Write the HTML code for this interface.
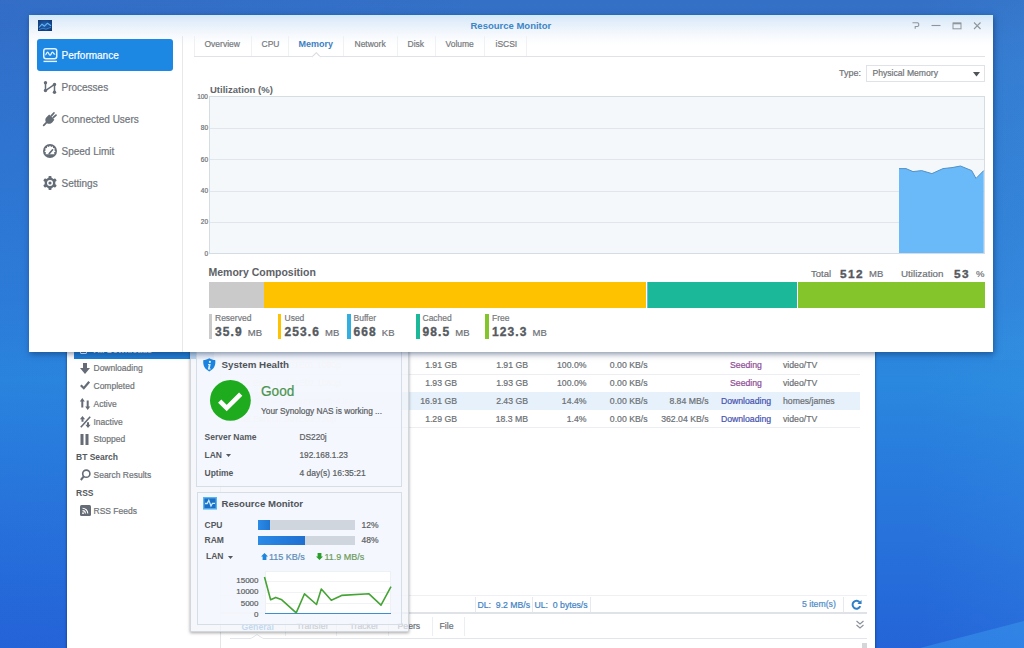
<!DOCTYPE html>
<html><head><meta charset="utf-8">
<style>
*{margin:0;padding:0;box-sizing:border-box}
html,body{width:1024px;height:648px;overflow:hidden}
body{position:relative;font-family:"Liberation Sans",sans-serif;color:#555;
background:linear-gradient(90deg,rgba(30,60,210,0.05) 0%,rgba(0,0,0,0) 50%,rgba(0,0,0,0) 90%,rgba(70,175,240,0.1) 100%),linear-gradient(180deg,#3470c6 0px,#3075ce 100px,#2d7ed8 300px,#2a88de 380px,#2877dc 500px,#2464d8 648px)}
.a{position:absolute;white-space:nowrap;line-height:0;-webkit-text-stroke:0.2px currentColor}
.b,b{-webkit-text-stroke:0}
.r{text-align:right}
.b{font-weight:bold}
.bx{position:absolute}
svg{position:absolute;overflow:visible}
</style></head><body>
<!-- desktop highlight -->
<div class="bx" style="left:993px;top:0;width:31px;height:360px;background:linear-gradient(180deg,rgba(70,150,225,0) 0px,rgba(70,160,230,0.12) 60px,rgba(70,165,235,0.12) 360px)"></div>
<svg style="left:0;top:0" width="1024" height="648"><polygon points="920,648 1024,621 1024,648" fill="rgba(60,160,240,0.45)"/></svg>

<!-- ===== Download Station window ===== -->
<div class="bx" id="ds" style="left:66.5px;top:290px;width:808.5px;height:370px;background:#fff;box-shadow:0 0 2.5px rgba(0,30,90,0.7)"></div>
<div class="bx" style="left:220px;top:290px;width:1px;height:360px;background:#e2e5e9"></div>
<div class="bx" style="left:74px;top:338px;width:140px;height:20.5px;background:#1f7dd4"></div>
<div class="bx" style="left:80px;top:344px;width:7px;height:9.5px;border:1.3px solid #fff;border-radius:1px"></div>
<div class="a b" style="left:93.5px;top:350.3px;font-size:8.5px;color:#fff">All Downloads</div>
<div id="dsside" style="font-size:8.5px;color:#707478">
<svg style="left:80px;top:363px" width="10" height="11" viewBox="0 0 10 11"><path d="M3 0h4v5h3l-5 6l-5-6h3z" fill="#656c75"/></svg>
<div class="a" style="left:93.5px;top:368px">Downloading</div>
<svg style="left:80px;top:380px" width="10" height="10" viewBox="0 0 10 10"><path d="M0.8 5.2l3 3l5.4-6.4" fill="none" stroke="#656c75" stroke-width="2.2"/></svg>
<div class="a" style="left:93.5px;top:385.5px">Completed</div>
<svg style="left:80px;top:398px" width="10" height="12" viewBox="0 0 10 12"><path d="M2.3 0l2.5 3.6h-1.5v6h-2v-6h-1.5z M7.7 12l2.5-3.6h-1.5v-6h-2v6h-1.5z" fill="#656c75"/></svg>
<div class="a" style="left:93.5px;top:403.5px">Active</div>
<svg style="left:80px;top:416px" width="11" height="12" viewBox="0 0 11 12"><path d="M2.5 0l2.6 3.2h-1.6v2.6h-2v-2.6h-1.6z" fill="#656c75"/><path d="M8 12l2.6-3.2h-1.6v-2.6h-2v2.6h-1.6z" fill="#656c75"/><path d="M0.8 11.2l9.4-10.4" stroke="#656c75" stroke-width="1.6"/></svg>
<div class="a" style="left:93.5px;top:421.5px">Inactive</div>
<svg style="left:80px;top:434px" width="9" height="11" viewBox="0 0 9 11"><rect x="0.5" y="0" width="3" height="11" fill="#656c75"/><rect x="5.5" y="0" width="3" height="11" fill="#656c75"/></svg>
<div class="a" style="left:93.5px;top:439px">Stopped</div>
<div class="a b" style="left:76px;top:457px;color:#555a60">BT Search</div>
<svg style="left:80px;top:469px" width="11" height="12" viewBox="0 0 11 12"><circle cx="6.3" cy="4.7" r="3.6" fill="none" stroke="#656c75" stroke-width="1.6"/><path d="M3.8 7.4l-3 3.6" stroke="#656c75" stroke-width="2"/></svg>
<div class="a" style="left:93.5px;top:475px">Search Results</div>
<div class="a b" style="left:76px;top:493px;color:#555a60">RSS</div>
<svg style="left:79.5px;top:505px" width="11" height="11" viewBox="0 0 11 11"><rect width="11" height="11" rx="1.5" fill="#656c75"/><path d="M2.5 3.2a5.3 5.3 0 0 1 5.3 5.3M2.5 5.6a2.9 2.9 0 0 1 2.9 2.9" fill="none" stroke="#fff" stroke-width="1.1"/><circle cx="3" cy="8.2" r="0.9" fill="#fff"/></svg>
<div class="a" style="left:93.5px;top:511px">RSS Feeds</div>
</div>
<div id="dstable" style="font-size:8.7px;color:#6b6f74">
<div class="bx" style="left:220px;top:374px;width:640px;height:1px;background:#eceef1"></div>
<div class="bx" style="left:220px;top:392px;width:640px;height:18px;background:#e6f1fb"></div>
<div class="bx" style="left:220px;top:427px;width:640px;height:1px;background:#eceef1"></div>
<!-- rows -->
<div style="color:#d6d9dc">
<div class="a" style="left:226px;top:365px">Planet.Earth.II.S01E01.1080p</div>
<div class="a" style="left:226px;top:383px">Planet.Earth.II.S01E02.1080p</div>
<div class="a" style="left:226px;top:401px">ubuntu-20.04-desktop-amd64.iso</div>
<div class="a" style="left:226px;top:419px">Planet.Earth.II.S01E03.720p</div>
</div>
<div class="a r" style="right:567px;top:365px">1.91 GB</div>
<div class="a r" style="right:496px;top:365px">1.91 GB</div>
<div class="a r" style="right:437.5px;top:365px">100.0%</div>
<div class="a r" style="right:376.5px;top:365px">0.00 KB/s</div>
<div class="a" style="left:746px;top:365px;transform:translateX(-50%);color:#8d4c94">Seeding</div>
<div class="a" style="left:783px;top:365px">video/TV</div>

<div class="a r" style="right:567px;top:383px">1.93 GB</div>
<div class="a r" style="right:496px;top:383px">1.93 GB</div>
<div class="a r" style="right:437.5px;top:383px">100.0%</div>
<div class="a r" style="right:376.5px;top:383px">0.00 KB/s</div>
<div class="a" style="left:746px;top:383px;transform:translateX(-50%);color:#8d4c94">Seeding</div>
<div class="a" style="left:783px;top:383px">video/TV</div>

<div class="a r" style="right:567px;top:401px">16.91 GB</div>
<div class="a r" style="right:496px;top:401px">2.43 GB</div>
<div class="a r" style="right:437.5px;top:401px">14.4%</div>
<div class="a r" style="right:376.5px;top:401px">0.00 KB/s</div>
<div class="a r" style="right:315.5px;top:401px">8.84 MB/s</div>
<div class="a" style="left:746px;top:401px;transform:translateX(-50%);color:#4652b0">Downloading</div>
<div class="a" style="left:783px;top:401px">homes/james</div>

<div class="a r" style="right:567px;top:419px">1.29 GB</div>
<div class="a r" style="right:496px;top:419px">18.3 MB</div>
<div class="a r" style="right:437.5px;top:419px">1.4%</div>
<div class="a r" style="right:376.5px;top:419px">0.00 KB/s</div>
<div class="a r" style="right:315.5px;top:419px">362.04 KB/s</div>
<div class="a" style="left:746px;top:419px;transform:translateX(-50%);color:#4652b0">Downloading</div>
<div class="a" style="left:783px;top:419px">video/TV</div>

<!-- status bar -->
<div class="bx" style="left:220px;top:595px;width:647px;height:1px;background:#eef0f3"></div>
<div class="bx" style="left:475px;top:597px;width:1px;height:15px;background:#e6e9ed"></div>
<div class="a" style="left:477.5px;top:604.5px;color:#3d82c4">DL:&nbsp; 9.2 MB/s</div>
<div class="bx" style="left:532px;top:597px;width:1px;height:15px;background:#e6e9ed"></div>
<div class="a" style="left:534.5px;top:604.5px;color:#3d82c4">UL:&nbsp; 0 bytes/s</div>
<div class="bx" style="left:590px;top:597px;width:1px;height:15px;background:#e6e9ed"></div>
<div class="a" style="left:802px;top:603.7px;color:#4d8cc6">5 item(s)</div>
<div class="bx" style="left:843px;top:597px;width:1px;height:15px;background:#e6e9ed"></div>
<svg style="left:850.5px;top:599px" width="11" height="11" viewBox="0 0 10 10"><path d="M8 3.2A3.6 3.6 0 1 0 8.4 6.5" fill="none" stroke="#2f7fc6" stroke-width="1.8"/><path d="M9.6 0.8v3.8h-3.8z" fill="#2f7fc6"/></svg>
<div class="bx" style="left:220px;top:612px;width:647px;height:2px;background:#dfe3e8"></div>
<!-- bottom panel tabs -->

<div class="a b" style="left:241.5px;top:627px;color:#4a90d0">General</div>
<div class="bx" style="left:285px;top:617px;width:1px;height:19px;background:#eceef1"></div>
<div class="a" style="left:296.5px;top:626px">Transfer</div>
<div class="bx" style="left:336px;top:617px;width:1px;height:19px;background:#eceef1"></div>
<div class="a" style="left:349.5px;top:626px">Tracker</div>
<div class="bx" style="left:387.5px;top:617px;width:1px;height:19px;background:#eceef1"></div>
<div class="a" style="left:397.5px;top:626px">Peers</div>
<div class="bx" style="left:431.5px;top:617px;width:1px;height:19px;background:#eceef1"></div>
<div class="a" style="left:439.5px;top:626px">File</div>
<div class="bx" style="left:463.5px;top:617px;width:1px;height:19px;background:#eceef1"></div>
<div class="bx" style="left:230px;top:638px;width:637px;height:1px;background:#e2e5e9"></div>
<svg style="left:855px;top:620px" width="10" height="10" viewBox="0 0 10 10"><path d="M1.5 1l3.5 3l3.5-3M1.5 5l3.5 3l3.5-3" fill="none" stroke="#8a9098" stroke-width="1.1"/></svg>
<div class="bx" style="left:862px;top:643px;width:5px;height:6px;background:#d4d6d9"></div>
<div class="a" style="left:238px;top:651.5px;color:#888">Destination:</div>
<svg style="left:251px;top:634px" width="12" height="6" viewBox="0 0 12 6"><path d="M0 4.5l6-4l6 4" fill="#fff" stroke="#e2e5e9" stroke-width="1"/><path d="M0.5 4.5h11" stroke="#fff" stroke-width="1.2"/></svg>
</div>

<!-- ===== widget panel ===== -->
<div id="widget">
<div class="bx" style="left:189.5px;top:330px;width:219px;height:301.5px;background:rgba(241,244,249,0.72);box-shadow:0 1px 3px rgba(0,0,0,0.35);border:1px solid rgba(200,206,214,0.8)"></div>
<!-- system health box -->
<div class="bx" style="left:196px;top:336px;width:206px;height:151px;background:rgba(244,247,252,0.82);border:1px solid #d5dde7"></div>
<svg style="left:203.3px;top:357.9px" width="12.6" height="13.5" viewBox="0 0 12.6 13.5"><path d="M6.3 0.2C4.3 1.5 2.3 1.9 0.4 2C0 4 0.2 7 1.4 9C2.6 11 4.3 12.4 6.3 13.4C8.3 12.4 10 11 11.2 9C12.4 7 12.6 4 12.2 2C10.3 1.9 8.3 1.5 6.3 0.2z" fill="#1c84e0"/><circle cx="6.9" cy="3.9" r="1.1" fill="#d8efff"/><path d="M5.2 6h2.5l-0.9 4.5h1l-0.3 1h-2.7l0.9-4.5h-0.8z" fill="#d8efff"/></svg>
<div class="a b" style="left:221.5px;top:364.5px;font-size:9.8px;color:#4f545a">System Health</div>
<svg style="left:209.8px;top:379.9px" width="41" height="41" viewBox="0 0 41 41"><circle cx="20.4" cy="20.4" r="20.4" fill="#1eac1e"/><path d="M9.7 21.1l7 7l14-14" fill="none" stroke="#fff" stroke-width="4.6"/></svg>
<div class="a" style="left:261px;top:391.8px;font-size:13.6px;color:#4b9450;transform:scaleY(1.1);transform-origin:0 0">Good</div>
<div class="a" style="left:261px;top:410.5px;font-size:8.3px;color:#5a5e63">Your Synology NAS is working ...</div>
<div class="a b" style="left:204.5px;top:436.5px;font-size:8.5px;color:#55595e">Server Name</div>
<div class="a" style="left:299.5px;top:436.5px;font-size:8.3px;color:#5a5e63">DS220j</div>
<div class="a b" style="left:204.5px;top:455px;font-size:8.5px;color:#55595e">LAN</div>
<svg style="left:226px;top:454px" width="5" height="3" viewBox="0 0 5 3"><path d="M0 0h5l-2.5 3z" fill="#55595e"/></svg>
<div class="a" style="left:299.5px;top:455px;font-size:8.3px;color:#5a5e63">192.168.1.23</div>
<div class="a b" style="left:204.5px;top:472.5px;font-size:8.5px;color:#55595e">Uptime</div>
<div class="a" style="left:299.5px;top:472.5px;font-size:8.5px;color:#5a5e63">4 day(s) 16:35:21</div>
<!-- resource monitor box -->
<div class="bx" style="left:196.5px;top:491.5px;width:205px;height:133px;background:rgba(244,247,252,0.82);border:1px solid #d5dde7"></div>
<svg style="left:202.5px;top:496.7px" width="14" height="12.6" viewBox="0 0 14 12.6"><rect x="0.7" y="0.7" width="12.6" height="11.2" fill="#1b6fc4" stroke="#58b4f2" stroke-width="1.4"/><path d="M2 6.5h2.2l1.6-3.2l2.2 5.6l1.5-2.6h2.5" fill="none" stroke="#c6ecff" stroke-width="1.3"/></svg>
<div class="a b" style="left:221.5px;top:503.5px;font-size:9.6px;color:#4f545a">Resource Monitor</div>
<div class="a b" style="left:204.5px;top:524.5px;font-size:8.5px;color:#55595e">CPU</div>
<div class="bx" style="left:258px;top:520px;width:96.5px;height:9.5px;background:#cfd6de"></div>
<div class="bx" style="left:258px;top:520px;width:12px;height:9.5px;background:linear-gradient(90deg,#2a8be6,#1f76d2)"></div>
<div class="a" style="left:361.5px;top:524.5px;font-size:8.5px;color:#5a5e63">12%</div>
<div class="a b" style="left:204.5px;top:540px;font-size:8.5px;color:#55595e">RAM</div>
<div class="bx" style="left:258px;top:535.5px;width:96.5px;height:9.5px;background:#cfd6de"></div>
<div class="bx" style="left:258px;top:535.5px;width:46.5px;height:9.5px;background:linear-gradient(90deg,#2a8be6,#1f6fd0)"></div>
<div class="a" style="left:361.5px;top:540px;font-size:8.5px;color:#5a5e63">48%</div>
<div class="a b" style="left:206px;top:556px;font-size:8.5px;color:#55595e">LAN</div>
<svg style="left:228px;top:555.5px" width="5" height="3" viewBox="0 0 5 3"><path d="M0 0h5l-2.5 3z" fill="#55595e"/></svg>
<svg style="left:260.5px;top:552.5px" width="7" height="7" viewBox="0 0 7 7"><path d="M3.5 0l3.5 3.5h-1.6v3.5h-3.8v-3.5h-1.6z" fill="#1f86dc"/></svg>
<div class="a" style="left:269px;top:556.5px;font-size:9px;color:#5a8cb8">115 KB/s</div>
<svg style="left:316px;top:552.5px" width="7" height="7" viewBox="0 0 7 7"><path d="M3.5 7l3.5-3.5h-1.6v-3.5h-3.8v3.5h-1.6z" fill="#2a9e2a"/></svg>
<div class="a" style="left:324.5px;top:556.5px;font-size:9px;color:#6c9c60">11.9 MB/s</div>
<!-- mini chart -->
<div class="bx" style="left:264.5px;top:570.5px;width:126.5px;height:43px;background:#fff;border:1px solid #eef1f4"></div>
<div class="bx" style="left:265px;top:581px;width:126px;height:1px;background:#f0f2f4"></div>
<div class="bx" style="left:265px;top:592px;width:126px;height:1px;background:#f0f2f4"></div>
<div class="bx" style="left:265px;top:603px;width:126px;height:1px;background:#f0f2f4"></div>
<div class="a r" style="right:765.5px;top:580.5px;font-size:8px;color:#5a5e63">15000</div>
<div class="a r" style="right:765.5px;top:592px;font-size:8px;color:#5a5e63">10000</div>
<div class="a r" style="right:765.5px;top:603.5px;font-size:8px;color:#5a5e63">5000</div>
<div class="a r" style="right:765.5px;top:615px;font-size:8px;color:#5a5e63">0</div>
<div class="bx" style="left:265px;top:612.5px;width:126px;height:1.2px;background:#3d8fd0"></div>
<svg style="left:0;top:0" width="1024" height="648"><polyline points="264.5,577 270.6,599.8 275.8,597.4 281.8,599.8 296.2,612.9 304.5,593.8 316.5,604.5 321.3,589 331.3,600.2 341.6,595.4 369,593.8 381,605.2 391,586.6" fill="none" stroke="#45a435" stroke-width="1.6" stroke-linejoin="round"/></svg>
</div>

<!-- ===== Resource Monitor window ===== -->
<div id="rm">
<div class="bx" style="left:29px;top:15px;width:964px;height:337px;background:#fff;box-shadow:1px 2px 6px rgba(10,35,80,0.5)"></div>
<div class="bx" style="left:29px;top:15px;width:964px;height:36px;background:linear-gradient(#c9eefc 0px,#d8e9f8 2px,#e2eefa 7px,#f6f9fd 20px,#fff 30px)"></div>
<!-- app icon -->
<svg style="left:38px;top:20px" width="14" height="11" viewBox="0 0 14 11"><defs><radialGradient id="ig" cx="50%" cy="45%" r="65%"><stop offset="0" stop-color="#2465b5"/><stop offset="1" stop-color="#0f3672"/></radialGradient></defs><rect width="14" height="11" fill="url(#ig)"/><path d="M1 7.5L4 4.2L6.5 6.2L9.5 3.2L13 5.8" fill="none" stroke="#62b4f4" stroke-width="1.1" stroke-linejoin="round"/><path d="M1 9.6L5 8.2L8 9.2L13 7.2" fill="none" stroke="#3f8cd6" stroke-width="0.9"/></svg>
<div class="a b" style="left:470.5px;top:25.5px;font-size:9.5px;color:#3d86c6">Resource Monitor</div>
<!-- controls -->
<svg style="left:905px;top:15px" width="90" height="25" viewBox="0 0 90 25"><path d="M7.5 7.8h5.3l0.9 0.9v1.9l-0.9 0.9h-2.6v2.3" fill="none" stroke="#90959b" stroke-width="1.1"/><path d="M26.5 10.5h9" stroke="#90959b" stroke-width="1.1"/><rect x="48" y="8" width="8" height="5.8" fill="none" stroke="#90959b" stroke-width="1"/><path d="M48 8.5h8" stroke="#90959b" stroke-width="1.6"/><path d="M69 7.5l6.5 6.5M75.5 7.5l-6.5 6.5" stroke="#90959b" stroke-width="1.1"/></svg>
<!-- sidebar -->
<div class="bx" style="left:182px;top:36px;width:1px;height:316px;background:#e6e8eb"></div>
<div class="bx" style="left:37px;top:39px;width:136px;height:32px;background:#1d87e4;border-radius:3px"></div>
<svg style="left:43px;top:48px" width="15" height="14.5" viewBox="0 0 15 14.5"><rect x="0.75" y="0.75" width="13" height="10" rx="2.2" fill="none" stroke="#e6f3ff" stroke-width="1.5"/><path d="M2.3 6.8C3.3 6.8 3.6 4.2 4.6 4.2S5.8 7.2 7 7.2S8.3 4.2 9.4 4.2S10.6 6.8 12.2 6" fill="none" stroke="#e6f3ff" stroke-width="1.3"/><path d="M0.5 13.4h13.5" stroke="#e6f3ff" stroke-width="1.4"/></svg>
<div class="a" style="left:61.5px;top:55.7px;font-size:10px;color:#fff">Performance</div>
<svg style="left:43px;top:80.5px" width="14" height="13" viewBox="0 0 14 13"><path d="M2.5 1.8v7.7l9-6v7.7" fill="none" stroke="#646c76" stroke-width="1.5"/><circle cx="2.5" cy="1.8" r="1.7" fill="#646c76"/><circle cx="2.5" cy="9.5" r="1.7" fill="#646c76"/><circle cx="11.5" cy="3.5" r="1.7" fill="#646c76"/><circle cx="11.5" cy="11.2" r="1.7" fill="#646c76"/></svg>
<div class="a" style="left:61.5px;top:87.5px;font-size:10px;color:#70747a">Processes</div>
<svg style="left:43px;top:112px" width="14" height="14" viewBox="0 0 14 14"><path d="M6.2 2.6l5.2 5.2l-2.2 2.6c-1.6 1.7-3.9 1.9-5.4 0.5l-0.6-0.6c-1.4-1.5-1.2-3.8 0.5-5.4z" fill="#646c76"/><path d="M3.6 10.4l-2.9 2.9" stroke="#646c76" stroke-width="1.8" stroke-linecap="round"/><path d="M8.3 3.8l2.6-2.8M10.2 5.7l2.8-2.6" stroke="#646c76" stroke-width="1.8" stroke-linecap="round"/></svg>
<div class="a" style="left:61.5px;top:120px;font-size:10px;color:#70747a">Connected Users</div>
<svg style="left:43px;top:143.7px" width="14" height="14" viewBox="0 0 14 14"><circle cx="7" cy="7" r="7" fill="#646c76"/><path d="M7 1.6l1.1 1.4l1.7-0.7l0.3 1.8l1.8 0.4l-0.6 1.7l1.3 1.2l-1.6 1l0.5 1.8h-9l0.5-1.8l-1.6-1l1.3-1.2l-0.6-1.7l1.8-0.4l0.3-1.8l1.7 0.7z" fill="#fff"/><path d="M6.2 9.6l3.4-3.8" stroke="#646c76" stroke-width="1.6" stroke-linecap="round"/></svg>
<div class="a" style="left:61.5px;top:152px;font-size:10px;color:#70747a">Speed Limit</div>
<svg style="left:43px;top:175.8px" width="14" height="14" viewBox="0 0 14 14"><rect x="5.5" y="0" width="3" height="14" rx="0.8" fill="#646c76" transform="rotate(0 7 7)"/><rect x="5.5" y="0" width="3" height="14" rx="0.8" fill="#646c76" transform="rotate(60 7 7)"/><rect x="5.5" y="0" width="3" height="14" rx="0.8" fill="#646c76" transform="rotate(120 7 7)"/><circle cx="7" cy="7" r="5.4" fill="#646c76"/><circle cx="7" cy="7" r="3" fill="#fff"/><circle cx="7" cy="7" r="1.6" fill="#646c76"/></svg>
<div class="a" style="left:61.5px;top:184px;font-size:10px;color:#70747a">Settings</div>
<!-- tabs -->
<div style="font-size:8.5px;color:#76797d">
<div class="bx" style="left:193.5px;top:36px;width:1px;height:20px;background:#eef0f2"></div>
<div class="a" style="left:204.5px;top:44px">Overview</div>
<div class="bx" style="left:251px;top:36px;width:1px;height:20px;background:#f0f1f3"></div>
<div class="a" style="left:261.5px;top:44px">CPU</div>
<div class="bx" style="left:287.5px;top:36px;width:1px;height:20px;background:#f0f1f3"></div>
<div class="a b" style="left:298.5px;top:44px;font-size:9px;color:#3c7ec2">Memory</div>
<div class="bx" style="left:343px;top:36px;width:1px;height:20px;background:#f0f1f3"></div>
<div class="a" style="left:354.5px;top:44px">Network</div>
<div class="bx" style="left:397px;top:36px;width:1px;height:20px;background:#f0f1f3"></div>
<div class="a" style="left:407.5px;top:44px">Disk</div>
<div class="bx" style="left:435px;top:36px;width:1px;height:20px;background:#f0f1f3"></div>
<div class="a" style="left:445.5px;top:44px">Volume</div>
<div class="bx" style="left:484px;top:36px;width:1px;height:20px;background:#f0f1f3"></div>
<div class="a" style="left:495.5px;top:44px">iSCSI</div>
<div class="bx" style="left:525.5px;top:36px;width:1px;height:20px;background:#f0f1f3"></div>
<div class="bx" style="left:193.5px;top:56px;width:791px;height:1px;background:#dfe2e6"></div>
<svg style="left:311.5px;top:51.5px" width="8.5" height="5.5" viewBox="0 0 8.5 5.5"><path d="M0 5l4.25-4.3l4.25 4.3" fill="#fff" stroke="#d9dce0" stroke-width="1.1"/><path d="M0.6 5.1h7.3" stroke="#fff" stroke-width="1.2"/></svg>
</div>
<!-- type select -->
<div class="a" style="left:839px;top:73px;font-size:9px;color:#707478">Type:</div>
<div class="bx" style="left:866px;top:64.5px;width:118.5px;height:17.7px;background:#fff;border:1px solid #dfe2e6"></div>
<div class="a" style="left:872.5px;top:73px;font-size:8.6px;color:#707478">Physical Memory</div>
<svg style="left:972.5px;top:72px" width="7" height="4.5" viewBox="0 0 7 4.5"><path d="M0 0h7l-3.5 4.5z" fill="#4e5358"/></svg>
<!-- chart -->
<div class="a b" style="left:210px;top:90px;font-size:9.5px;color:#62666b">Utilization (%)</div>
<div class="bx" style="left:209px;top:96px;width:775.5px;height:157.5px;background:#f5f8fb;border:1px solid #d5dce4"></div>
<div class="bx" style="left:210px;top:127.5px;width:774px;height:1px;background:#e1e6ec"></div>
<div class="bx" style="left:210px;top:159px;width:774px;height:1px;background:#e1e6ec"></div>
<div class="bx" style="left:210px;top:190.5px;width:774px;height:1px;background:#e1e6ec"></div>
<div class="bx" style="left:210px;top:221.5px;width:774px;height:1px;background:#e1e6ec"></div>
<div style="font-size:6.5px;color:#6d7176">
<div class="a r" style="right:816px;top:97px">100</div>
<div class="a r" style="right:816px;top:128px">80</div>
<div class="a r" style="right:816px;top:159.5px">60</div>
<div class="a r" style="right:816px;top:191px">40</div>
<div class="a r" style="right:816px;top:222px">20</div>
<div class="a r" style="right:816px;top:253.5px">0</div>
</div>
<svg style="left:0;top:0" width="1024" height="648"><polygon points="899,253 899,168.6 906,168.6 913,171.6 921.7,170.6 931.9,173.6 943,168.6 952,167.6 960.5,166 971.7,170.6 976,178.4 983.7,170.6 983.7,253" fill="#6ab9f8"/><polyline points="899,168.6 906,168.6 913,171.6 921.7,170.6 931.9,173.6 943,168.6 952,167.6 960.5,166 971.7,170.6 976,178.4 983.7,170.6" fill="none" stroke="#5292c8" stroke-width="1"/></svg>
<!-- memory composition -->
<div class="a b" style="left:208.5px;top:272px;font-size:10.5px;color:#5d6166">Memory Composition</div>
<div class="a" style="left:811px;top:274px;font-size:9.5px;color:#6d7176">Total</div>
<div class="a b" style="left:840px;top:274px;font-size:11.8px;letter-spacing:1.4px;color:#555a60;-webkit-text-stroke:0.35px #555a60">512</div>
<div class="a" style="left:869px;top:274px;font-size:9.5px;color:#6d7176">MB</div>
<div class="a" style="left:901px;top:274px;font-size:9.8px;color:#6d7176">Utilization</div>
<div class="a b" style="left:954px;top:274px;font-size:11.8px;letter-spacing:1.4px;color:#555a60;-webkit-text-stroke:0.35px #555a60">53</div>
<div class="a" style="left:976px;top:274px;font-size:9.5px;color:#6d7176">%</div>
<div class="bx" style="left:208.5px;top:282px;width:55px;height:26px;background:#cacaca"></div>
<div class="bx" style="left:263.5px;top:282px;width:382px;height:26px;background:#fec200"></div>
<div class="bx" style="left:646.5px;top:282px;width:1.5px;height:26px;background:#5ec4e0"></div>
<div class="bx" style="left:648px;top:282px;width:149px;height:26px;background:#1bb99a"></div>
<div class="bx" style="left:798px;top:282px;width:187px;height:26px;background:#84c52c"></div>
<!-- legend -->
<div class="bx" style="left:208.5px;top:313.5px;width:3.5px;height:25.5px;background:#cacaca"></div>
<div class="bx" style="left:277.7px;top:313.5px;width:3.5px;height:25.5px;background:#fec200"></div>
<div class="bx" style="left:347px;top:313.5px;width:3.5px;height:25.5px;background:#33aee0"></div>
<div class="bx" style="left:416px;top:313.5px;width:3.5px;height:25.5px;background:#1bb99a"></div>
<div class="bx" style="left:485.3px;top:313.5px;width:3.5px;height:25.5px;background:#84c52c"></div>
<div style="font-size:8.5px;color:#76797d">
<div class="a" style="left:215px;top:318px">Reserved</div>
<div class="a" style="left:284.5px;top:318px">Used</div>
<div class="a" style="left:353.5px;top:318px">Buffer</div>
<div class="a" style="left:422.5px;top:318px">Cached</div>
<div class="a" style="left:492px;top:318px">Free</div>
</div>
<div class="a" style="left:215px;top:331.5px;font-size:9.5px;color:#6d7176"><b style="font-size:12px;letter-spacing:1.1px;color:#555a60;margin-right:5px;-webkit-text-stroke:0.35px #555a60">35.9</b>MB</div>
<div class="a" style="left:284.5px;top:331.5px;font-size:9.5px;color:#6d7176"><b style="font-size:12px;letter-spacing:1.1px;color:#555a60;margin-right:5px;-webkit-text-stroke:0.35px #555a60">253.6</b>MB</div>
<div class="a" style="left:353.5px;top:331.5px;font-size:9.5px;color:#6d7176"><b style="font-size:12px;letter-spacing:1.1px;color:#555a60;margin-right:5px;-webkit-text-stroke:0.35px #555a60">668</b>KB</div>
<div class="a" style="left:422.5px;top:331.5px;font-size:9.5px;color:#6d7176"><b style="font-size:12px;letter-spacing:1.1px;color:#555a60;margin-right:5px;-webkit-text-stroke:0.35px #555a60">98.5</b>MB</div>
<div class="a" style="left:492px;top:331.5px;font-size:9.5px;color:#6d7176"><b style="font-size:12px;letter-spacing:1.1px;color:#555a60;margin-right:5px;-webkit-text-stroke:0.35px #555a60">123.3</b>MB</div>
</div>
</body></html>
